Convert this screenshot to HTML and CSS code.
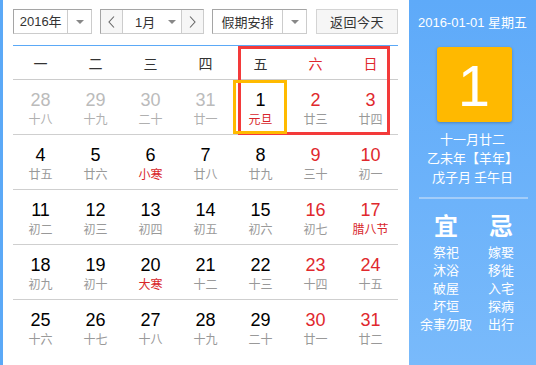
FILE: index.html
```html
<!DOCTYPE html>
<html lang="zh">
<head>
<meta charset="utf-8">
<link rel="stylesheet" href="styles.css">
</head>
<body>
<div class="app">
  <div class="main">
    <div class="toolbar">
      <div class="sel sel-year"><span class="sel-text">2016年</span><span class="sel-arrow"><i class="tri"></i></span></div>
      <div class="sel sel-month">
        <span class="nav-btn"><svg width="7" height="12" viewBox="0 0 7 12"><path d="M6 0.5 L1 6 L6 11.5" fill="none" stroke="#666" stroke-width="1.1"/></svg></span>
        <span class="month-mid"><span class="month-text">1月</span><i class="tri"></i></span>
        <span class="nav-btn nav-next"><svg width="7" height="12" viewBox="0 0 7 12"><path d="M1 0.5 L6 6 L1 11.5" fill="none" stroke="#666" stroke-width="1.1"/></svg></span>
      </div>
      <div class="sel sel-holiday"><span class="sel-text">假期安排</span><span class="sel-arrow"><i class="tri"></i></span></div>
      <div class="btn-today">返回今天</div>
    </div>
    <div class="table">
      <div class="week">
        <span>一</span><span>二</span><span>三</span><span>四</span><span>五</span><span class="red">六</span><span class="red">日</span>
      </div>
      <div class="row">
        <div class="cell other"><b>28</b><em>十八</em></div>
        <div class="cell other"><b>29</b><em>十九</em></div>
        <div class="cell other"><b>30</b><em>二十</em></div>
        <div class="cell other"><b>31</b><em>廿一</em></div>
        <div class="cell"><b>1</b><em class="fest">元旦</em></div>
        <div class="cell we"><b>2</b><em>廿三</em></div>
        <div class="cell we"><b>3</b><em>廿四</em></div>
      </div>
      <div class="row">
        <div class="cell"><b>4</b><em>廿五</em></div>
        <div class="cell"><b>5</b><em>廿六</em></div>
        <div class="cell"><b>6</b><em class="fest">小寒</em></div>
        <div class="cell"><b>7</b><em>廿八</em></div>
        <div class="cell"><b>8</b><em>廿九</em></div>
        <div class="cell we"><b>9</b><em>三十</em></div>
        <div class="cell we"><b>10</b><em>初一</em></div>
      </div>
      <div class="row">
        <div class="cell"><b>11</b><em>初二</em></div>
        <div class="cell"><b>12</b><em>初三</em></div>
        <div class="cell"><b>13</b><em>初四</em></div>
        <div class="cell"><b>14</b><em>初五</em></div>
        <div class="cell"><b>15</b><em>初六</em></div>
        <div class="cell we"><b>16</b><em>初七</em></div>
        <div class="cell we"><b>17</b><em class="fest">腊八节</em></div>
      </div>
      <div class="row">
        <div class="cell"><b>18</b><em>初九</em></div>
        <div class="cell"><b>19</b><em>初十</em></div>
        <div class="cell"><b>20</b><em class="fest">大寒</em></div>
        <div class="cell"><b>21</b><em>十二</em></div>
        <div class="cell"><b>22</b><em>十三</em></div>
        <div class="cell we"><b>23</b><em>十四</em></div>
        <div class="cell we"><b>24</b><em>十五</em></div>
      </div>
      <div class="row last">
        <div class="cell"><b>25</b><em>十六</em></div>
        <div class="cell"><b>26</b><em>十七</em></div>
        <div class="cell"><b>27</b><em>十八</em></div>
        <div class="cell"><b>28</b><em>十九</em></div>
        <div class="cell"><b>29</b><em>二十</em></div>
        <div class="cell we"><b>30</b><em>廿一</em></div>
        <div class="cell we"><b>31</b><em>廿二</em></div>
      </div>
      <div class="mark-red"></div>
      <div class="mark-today"></div>
    </div>
  </div>
  <div class="panel">
    <div class="p-date">2016-01-01 星期五</div>
    <div class="p-day">1</div>
    <div class="p-lunar">
      <div>十一月廿二</div>
      <div>乙未年【羊年】</div>
      <div>戊子月 壬午日</div>
    </div>
    <div class="p-sep"></div>
    <div class="p-yiji">
      <div class="p-col">
        <div class="p-big">宜</div>
        <div>祭祀</div><div>沐浴</div><div>破屋</div><div>坏垣</div><div>余事勿取</div>
      </div>
      <div class="p-col">
        <div class="p-big">忌</div>
        <div>嫁娶</div><div>移徙</div><div>入宅</div><div>探病</div><div>出行</div>
      </div>
    </div>
  </div>
</div>
</body>
</html>
```

FILE: styles.css
```css
html, body { margin: 0; padding: 0; background: #fff; }
body { font-family: "Liberation Sans", "Noto Sans CJK SC", sans-serif; }
.app {
  width: 536px; height: 365px; display: flex; box-sizing: border-box;
  border-left: 3px solid #5ba9f7; overflow: hidden;
}
.main { width: 406px; padding: 0 11px 0 10px; box-sizing: border-box; }
.toolbar { display: flex; height: 45px; padding-top: 9px; box-sizing: border-box; align-items: flex-start; }
.sel {
  display: flex; height: 25px; box-sizing: border-box;
  border: 1px solid #ccc; border-top-color: #a5a5a5; border-left-color: #a5a5a5;
  font-family: "Noto Sans CJK SC", sans-serif; font-size: 13px; color: #333; background: #fff;
}
.sel-text { display: flex; align-items: center; justify-content: center; line-height: 1; }
.sel-arrow { display: flex; align-items: center; justify-content: center; border-left: 1px solid #ccc; width: 23px; }
.tri { display: block; width: 0; height: 0; border-left: 4px solid transparent; border-right: 4px solid transparent; border-top: 4px solid #888; }
.sel-year { width: 79px; }
.sel-year .sel-text { width: 54px; font-family: "Liberation Sans", "Noto Sans CJK SC", sans-serif; }
.sel-month { width: 104px; margin-left: 8px; }
.nav-btn { width: 21px; background: #f6f6f6; display: flex; align-items: center; justify-content: center; border-right: 1px solid #ccc; }
.nav-next { border-right: 0; border-left: 1px solid #ccc; }
.month-mid { flex: 1; display: flex; align-items: center; padding-left: 12px; }
.month-text { font-family: "Liberation Sans", "Noto Sans CJK SC", sans-serif; width: 33px; }
.sel-holiday { width: 95px; margin-left: 8px; }
.sel-holiday .sel-text { width: 70px; }
.btn-today {
  margin-left: 9px; width: 82px; height: 25px; box-sizing: border-box;
  border: 1px solid #d4d4d4; background: #f6f6f6;
  font-family: "Noto Sans CJK SC", sans-serif; font-size: 13px; color: #333;
  display: flex; align-items: center; justify-content: center; letter-spacing: 0.5px;
}
.table { position: relative; border-top: 1px solid #5ba9f7; width: 385px; }
.week { display: grid; grid-template-columns: repeat(7, 55px); height: 34px; border-bottom: 1px solid #ccc; box-sizing: border-box; }
.week span { display: flex; align-items: center; justify-content: center; font-family: "Noto Sans CJK SC", sans-serif; font-size: 14px; color: #333; padding-top: 1px; }
.week .red { color: #e0282d; }
.row { display: grid; grid-template-columns: repeat(7, 55px); height: 55px; border-bottom: 1px solid #cfcfcf; box-sizing: border-box; }
.row.last { border-bottom: 0; }
.cell { display: flex; flex-direction: column; align-items: center; padding-top: 10px; }
.cell b { font-weight: normal; font-size: 18px; line-height: 20px; color: #000; font-family: "Liberation Sans", sans-serif; }
.cell em { font-style: normal; font-size: 12px; line-height: 18px; color: #999; font-family: "Noto Sans CJK SC", sans-serif; }
.cell.other b { color: #bbb; }
.cell.other em { color: #b0b0b0; }
.cell.we b { color: #e0282d; }
.cell em.fest { color: #d8262b; }
.mark-red { position: absolute; left: 225px; top: 0; width: 152px; height: 89px; border: 3px solid #f33a3a; box-sizing: border-box; }
.mark-today { position: absolute; left: 220px; top: 34px; width: 54px; height: 54px; border: 3px solid #ffba00; box-sizing: border-box; }
.panel {
  width: 127px; height: 365px;
  background: linear-gradient(#5eaaf9, #79bafb);
  color: #fff; font-family: "Noto Sans CJK SC", sans-serif;
  display: flex; flex-direction: column; align-items: center;
}
.p-date { margin-top: 13px; height: 20px; line-height: 20px; font-size: 13px; font-family: "Liberation Sans", "Noto Sans CJK SC", sans-serif; }
.p-day {
  margin-top: 14px; margin-left: 3px; width: 75px; height: 75px; border-radius: 3px;
  background: #ffb900; box-shadow: 0 1px 3px rgba(0,0,0,0.25);
  display: flex; align-items: center; justify-content: center;
  font-family: "Liberation Sans", sans-serif; font-size: 58px; line-height: 1; padding-top: 2px; box-sizing: border-box;
}
.p-lunar { margin-top: 7px; font-size: 13px; line-height: 19px; text-align: center; }
.p-sep { margin-top: 11px; width: 109px; height: 2px; margin-left: 2px; background: #a3cdf9; }
.p-yiji { display: flex; margin-top: 11px; margin-left: 2px; }
.p-col { width: 55px; display: flex; flex-direction: column; align-items: center; font-size: 13px; line-height: 18px; white-space: nowrap; }
.p-big { font-size: 24px; line-height: 30px; margin-bottom: 3px; font-weight: bold; }
```
